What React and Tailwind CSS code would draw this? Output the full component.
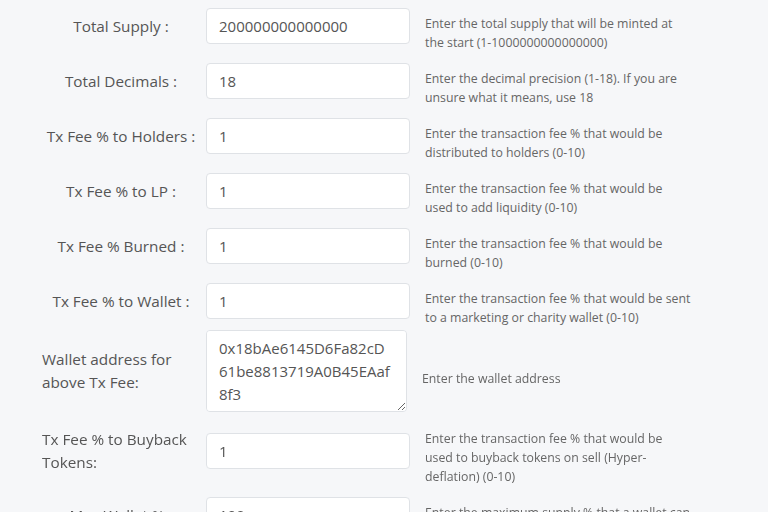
const rows = [
  { label: 'Total Supply :', value: '200000000000000', help: 'Enter the total supply that will be minted at the start (1-1000000000000000)' },
  { label: 'Total Decimals :', value: '18', help: 'Enter the decimal precision (1-18). If you are unsure what it means, use 18' },
  { label: 'Tx Fee % to Holders :', value: '1', help: 'Enter the transaction fee % that would be distributed to holders (0-10)' },
  { label: 'Tx Fee % to LP :', value: '1', help: 'Enter the transaction fee % that would be used to add liquidity (0-10)' },
  { label: 'Tx Fee % Burned :', value: '1', help: 'Enter the transaction fee % that would be burned (0-10)' },
  { label: 'Tx Fee % to Wallet :', value: '1', help: 'Enter the transaction fee % that would be sent to a marketing or charity wallet (0-10)' },
];

function FieldRow({ label, value, help, left }) {
  return (
    <div className="flex items-center">
      <div className={`ml-[41px] w-[160px] shrink-0 text-[15.3px] leading-[23px] text-[#555] ${left ? 'text-left pl-px' : 'text-center'}`}>
        {label}
      </div>
      <input
        readOnly
        value={value}
        className="ml-[5px] h-9 w-[204px] shrink-0 rounded border border-[#dfe2e6] bg-white px-3 text-[15px] text-[#555] outline-none"
      />
      <p className="ml-[15px] w-[267px] pt-[14px] text-[12.3px] font-stretch-[92%] leading-[19px] text-[#666]">{help}</p>
    </div>
  );
}

export default function App() {
  return (
    <div className="min-h-screen bg-[#f6f7f9] font-['Open_Sans',sans-serif]">
      <div className="flex flex-col gap-[3px]">
        {rows.map(r => <FieldRow key={r.label} {...r} />)}

        {/* wallet address */}
        <div className="flex items-center">
          <div className="ml-[41px] w-[160px] shrink-0 pl-px text-[15.3px] leading-[23px] text-[#555]">
            Wallet address for above Tx Fee:
          </div>
          <textarea
            readOnly
            value="0x18bAe6145D6Fa82cD61be8813719A0B45EAaf8f3"
            className="ml-[5px] h-[82px] w-[201px] shrink-0 rounded border border-[#dfe2e6] bg-white pl-3 pr-[15px] py-[6px] text-[15px] leading-[23px] text-[#555] outline-none"
          />
          <p className="ml-[15px] pt-[14px] text-[12.3px] font-stretch-[92%] leading-[19px] text-[#666]">Enter the wallet address</p>
        </div>

        <FieldRow left label="Tx Fee % to Buyback Tokens:" value="1"
          help="Enter the transaction fee % that would be used to buyback tokens on sell (Hyper-deflation) (0-10)" />
        <FieldRow label="Max Wallet % :" value="100"
          help="Enter the maximum supply % that a wallet can hold (1-100)" />
      </div>
    </div>
  );
}
